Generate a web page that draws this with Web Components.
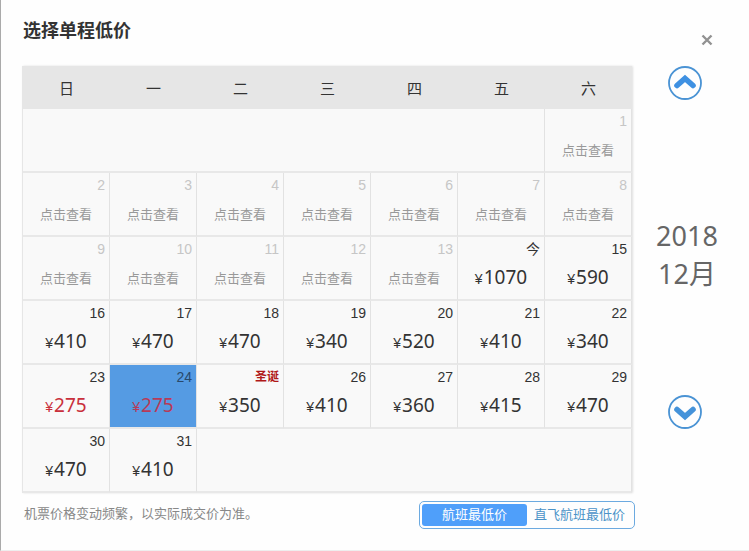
<!DOCTYPE html>
<html lang="zh-CN">
<head>
<meta charset="UTF-8">
<title>选择单程低价</title>
<style>
  body {
    margin: 0;
    background: #fefefe;
    color: #333;
    font-family: "Liberation Sans", "Noto Sans CJK SC", sans-serif;
  }
</style>
</head>
<body>
<fare-dialog>
  <span slot="title">选择单程低价</span>
  <fare-calendar></fare-calendar>
  <month-nav slot="nav" year="2018" month="12"></month-nav>
  <span slot="note">机票价格变动频繁，以实际成交价为准。</span>
  <fare-switch slot="switch"></fare-switch>
</fare-dialog>

<script>
class FareDialog extends HTMLElement {
  constructor() {
    super();
    this.attachShadow({ mode: 'open' });
    this.shadowRoot.innerHTML = `
      <style>
        :host {
          display: block;
          box-sizing: border-box;
          min-height: 100vh;
          padding: 16px 18px 20px 21px;
          border-left: 1px solid #aaa;
          border-bottom: 1px solid #eee;
        }
        header {
          display: flex;
          justify-content: space-between;
          min-height: 38px;
          padding-bottom: 12px;
        }
        h1 {
          margin: 0;
          padding-left: 1px;
          font-size: 18px;
          line-height: 30px;
        }
        .close {
          align-self: flex-end;
          display: flex;
          align-items: center;
          justify-content: center;
          width: 28px;
          height: 28px;
          margin-right: 10px;
          padding: 0;
          border: 0;
          background: none;
        }
        .body {
          display: grid;
          grid-template-columns: minmax(0, 1fr) 88px;
          gap: 8px;
        }
        footer {
          display: flex;
          grid-column: 1;
          justify-content: space-between;
          align-items: flex-start;
        }
        p {
          margin: 0;
          padding-left: 2px;
          color: #888;
          font-size: 13px;
          line-height: 26px;
        }
      </style>
      <header>
        <h1><slot name="title"></slot></h1>
        <button class="close" type="button" aria-label="关闭">
          <svg width="12" height="12" viewBox="0 0 12 12" fill="none" stroke="#929292" stroke-width="2.4">
            <path d="M1.500 1.500l9 9M10.500 1.500l-9 9"/>
          </svg>
        </button>
      </header>
      <div class="body">
        <slot></slot>
        <slot name="nav"></slot>
        <footer>
          <p><slot name="note"></slot></p>
          <slot name="switch"></slot>
        </footer>
      </div>
    `;
  }
}

class FareDay extends HTMLElement {
  constructor() {
    super();
    this.attachShadow({ mode: 'open' });
  }

  connectedCallback() {
    const price = this.getAttribute('price');
    const body = price
      ? `<span class="price"><small>¥</small>${price}</span>`
      : '<span class="check">点击查看</span>';
    this.shadowRoot.innerHTML = `
      <style>
        :host {
          display: block;
          color: #333;
        }
        :host([past]) .date { color: #c6c6c6; }
        :host([low]) .price { color: #c9303c; }
        :host([selected]) button { background: #559be3; }
        :host([selected]) .date { color: #29496b; }
        :host([selected]) .price { color: #b83a58; }
        :host([festival]) .date {
          color: #b01818;
          font-size: 12px;
          font-weight: bold;
        }
        button {
          display: flex;
          flex-direction: column;
          width: 100%;
          height: 62px;
          padding: 0;
          border: 0;
          background: none;
          color: inherit;
          font-family: inherit;
        }
        .date {
          padding-right: 4px;
          text-align: right;
          font-size: 14px;
          line-height: 24px;
        }
        .date, .price, .check {
          box-sizing: border-box;
          width: 100%;
        }
        .price {
          font-family: "Noto Sans", sans-serif;
          font-size: 19px;
          line-height: 32px;
        }
        small {
          margin-right: 1px;
          font-family: "Liberation Sans", sans-serif;
          font-size: 14px;
        }
        .check {
          color: #999;
          font-size: 13px;
          line-height: 36px;
        }
      </style>
      <button type="button">
        <span class="date"><slot></slot></span>
        ${body}
      </button>
    `;
  }
}

class FareCalendar extends HTMLElement {
  constructor() {
    super();
    this.attachShadow({ mode: 'open' });
    const weekdays = ['日', '一', '二', '三', '四', '五', '六'];
    const prices = {
      14: 1070, 15: 590, 16: 410, 17: 470, 18: 470, 19: 340, 20: 520, 21: 410, 22: 340,
      23: 275, 24: 275, 25: 350, 26: 410, 27: 360, 28: 415, 29: 470, 30: 470, 31: 410
    };
    const labels = { 14: '今', 25: '圣诞' };
    const flags = { 23: 'low', 24: 'low selected', 25: 'festival' };

    const cell = day => {
      const price = prices[day] ? `price="${prices[day]}"` : 'past';
      return `<td><fare-day ${price} ${flags[day] || ''}>${labels[day] || day}</fare-day></td>`;
    };

    // the 1st is a Saturday, so the first row starts with six blank days
    let rows = `<tr><td colspan="6"></td>${cell(1)}</tr>`;
    for (let start = 2; start <= 31; start += 7) {
      let cells = '';
      for (let day = start; day < start + 7 && day <= 31; day++) cells += cell(day);
      if (start + 6 > 31) cells += `<td colspan="${start + 6 - 31}"></td>`;
      rows += `<tr>${cells}</tr>`;
    }

    this.shadowRoot.innerHTML = `
      <style>
        :host {
          display: block;
          padding-right: 3px;
        }
        table {
          width: 100%;
          table-layout: fixed;
          border-collapse: separate;
          border-spacing: 0;
          border-left: 1px solid #e6e6e6;
          background: #f9f9f9;
          box-shadow: 1px 0 2px rgba(0, 0, 0, 0.12);
        }
        th {
          height: 43px;
          padding: 0;
          background: #e6e6e6;
          font-size: 15px;
          font-weight: normal;
        }
        td {
          height: 62px;
          padding: 0;
          border-right: 1px solid #e2e2e2;
          border-bottom: 2px solid #e8e8e8;
        }
      </style>
      <table>
        <thead><tr>${weekdays.map(d => `<th scope="col">${d}</th>`).join('')}</tr></thead>
        <tbody>${rows}</tbody>
      </table>
    `;
  }
}

class MonthNav extends HTMLElement {
  constructor() {
    super();
    this.attachShadow({ mode: 'open' });
  }

  connectedCallback() {
    this.shadowRoot.innerHTML = `
      <style>
        :host {
          display: flex;
          flex-direction: column;
          justify-content: space-between;
          align-items: center;
          padding-bottom: 64px;
        }
        button {
          height: 34px;
          margin-right: 4px;
          padding: 0;
          border: 0;
          background: none;
        }
        svg { display: block; }
        .month {
          padding-top: 14px;
          color: #666;
          font-family: "Noto Sans", "Noto Sans CJK SC", sans-serif;
          font-size: 27px;
          line-height: 38px;
          text-align: center;
        }
      </style>
      <button type="button" aria-label="上个月">
        <svg width="34" height="34" viewBox="0 0 34 34" fill="none">
          <circle cx="17" cy="17" r="16" stroke="#4a93d4" stroke-width="1.8"/>
          <path d="M9 19.500L17 12.500l8 7" stroke="#3f91e2" stroke-width="5.600" stroke-linecap="round"/>
        </svg>
      </button>
      <div class="month">${this.getAttribute('year')}<br>${this.getAttribute('month')}月</div>
      <button type="button" aria-label="下个月">
        <svg width="34" height="34" viewBox="0 0 34 34" fill="none">
          <circle cx="17" cy="17" r="16" stroke="#4a93d4" stroke-width="1.8"/>
          <path d="M9 14.500L17 21.500l8-7" stroke="#4593da" stroke-width="5.600" stroke-linecap="round"/>
        </svg>
      </button>
    `;
  }
}

class FareSwitch extends HTMLElement {
  constructor() {
    super();
    this.attachShadow({ mode: 'open' });
    this.shadowRoot.innerHTML = `
      <style>
        :host {
          display: flex;
          box-sizing: border-box;
          height: 28px;
          padding: 2px;
          border: 1px solid #6caae0;
          border-radius: 5px;
        }
        button {
          width: 105px;
          padding: 0;
          border: 0;
          border-radius: 3px;
          background: none;
          color: #4b93c8;
          font-family: inherit;
          font-size: 13px;
          line-height: 22px;
          white-space: nowrap;
        }
        button[aria-pressed="true"] {
          background: #4f9ffa;
          color: #fff;
        }
      </style>
      <button type="button" aria-pressed="true">航班最低价</button>
      <button type="button" aria-pressed="false">直飞航班最低价</button>
    `;
  }
}

customElements.define('fare-dialog', FareDialog);
customElements.define('fare-day', FareDay);
customElements.define('fare-calendar', FareCalendar);
customElements.define('month-nav', MonthNav);
customElements.define('fare-switch', FareSwitch);
</script>
</body>
</html>
